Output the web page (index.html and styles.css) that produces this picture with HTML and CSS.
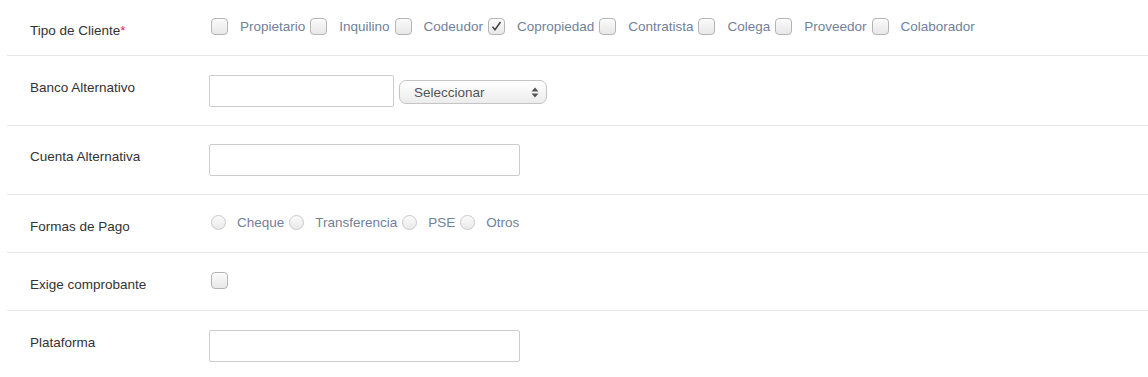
FILE: index.html
```html
<!DOCTYPE html>
<html lang="es">
<head>
    <meta charset="UTF-8">
    <meta name="viewport" content="width=device-width, initial-scale=1.0">
    <title>Cliente</title>
    <link rel="stylesheet" href="styles.css">
</head>
<body>
    <form class="client-form">
        <div class="form-row row-first">
            <label class="row-label label-low">Tipo de Cliente<span class="required">*</span></label>
            <div class="options">
                <label class="opt"><span class="box"></span>Propietario</label>
                <label class="opt"><span class="box"></span>Inquilino</label>
                <label class="opt"><span class="box"></span>Codeudor</label>
                <label class="opt"><span class="box checked"><svg width="15" height="15" viewBox="0 0 15 15"><path d="M3.5 7.8 L6 10.8 L11.5 3" fill="none" stroke="#444" stroke-width="1.5"/></svg></span>Copropiedad</label>
                <label class="opt"><span class="box"></span>Contratista</label>
                <label class="opt"><span class="box"></span>Colega</label>
                <label class="opt"><span class="box"></span>Proveedor</label>
                <label class="opt"><span class="box"></span>Colaborador</label>
            </div>
        </div>

        <div class="form-row row-input row-tall">
            <label class="row-label label-high">Banco Alternativo</label>
            <div class="controls">
                <input type="text" class="text-input short">
                <div class="fake-select">
                    <span>Seleccionar</span>
                    <svg width="8" height="11" viewBox="0 0 8 11"><path d="M4 0.5 L7.5 4.5 L0.5 4.5 Z M4 10.5 L7.5 6.5 L0.5 6.5 Z" fill="#555"/></svg>
                </div>
            </div>
        </div>

        <div class="form-row row-input">
            <label class="row-label label-high">Cuenta Alternativa</label>
            <div class="controls">
                <input type="text" class="text-input">
            </div>
        </div>

        <div class="form-row row-check">
            <label class="row-label label-low">Formas de Pago</label>
            <div class="options">
                <label class="opt radio-opt"><span class="radio"></span>Cheque</label>
                <label class="opt radio-opt"><span class="radio"></span>Transferencia</label>
                <label class="opt radio-opt"><span class="radio"></span>PSE</label>
                <label class="opt radio-opt"><span class="radio"></span>Otros</label>
            </div>
        </div>

        <div class="form-row row-check">
            <label class="row-label label-low">Exige comprobante</label>
            <div class="options">
                <span class="box"></span>
            </div>
        </div>

        <div class="form-row row-input no-border">
            <label class="row-label label-high">Plataforma</label>
            <div class="controls">
                <input type="text" class="text-input">
            </div>
        </div>
    </form>
</body>
</html>
```

FILE: styles.css
```css
body {
    margin: 0;
    font-family: "Liberation Sans", Arial, sans-serif;
    font-size: 13.5px;
    color: #333;
    background-color: #fff;
}
.client-form {
    margin-left: 7px;
}
.form-row {
    display: flex;
    align-items: center;
    border-bottom: 1px solid #e6e6e6;
    box-sizing: border-box;
}
.row-first {
    height: 56px;
}
.row-input {
    height: 69px;
}
.row-tall {
    height: 70px;
}
.row-check {
    height: 58px;
}
.no-border {
    border-bottom: none;
}
.row-label {
    width: 202px;
    flex-shrink: 0;
    box-sizing: border-box;
    padding-left: 23px;
    line-height: 18px;
}
.label-high {
    padding-bottom: 6px;
}
.label-low {
    padding-top: 7px;
}
.required {
    color: #e0245e;
}
.options {
    display: flex;
    align-items: center;
    padding-left: 2px;
    padding-bottom: 2px;
}
.opt {
    display: flex;
    align-items: center;
    color: #71819a;
    line-height: 18px;
    margin-right: 5px;
}
.box {
    width: 17px;
    height: 17px;
    box-sizing: border-box;
    border: 1px solid #b4b4b4;
    border-radius: 4px;
    background: linear-gradient(#fafafa, #e8e8e8);
    box-shadow: inset 0 1px 1px rgba(255, 255, 255, 0.8);
    display: flex;
    align-items: center;
    justify-content: center;
    margin-right: 12px;
    flex-shrink: 0;
}
.radio {
    width: 15px;
    height: 15px;
    box-sizing: border-box;
    border: 1px solid #c9c9c9;
    border-radius: 50%;
    background: linear-gradient(#fbfbfb, #e9e9e9);
    margin-right: 11px;
    flex-shrink: 0;
}
.controls {
    display: flex;
    align-items: center;
}
.text-input {
    width: 311px;
    height: 32px;
    box-sizing: border-box;
    border: 1px solid #ccc;
    border-radius: 2px;
    margin: 0;
    padding: 4px 8px;
    font-family: inherit;
}
.text-input.short {
    width: 185px;
}
.fake-select {
    width: 148px;
    height: 24px;
    box-sizing: border-box;
    margin-left: 5px;
    margin-top: 3px;
    border: 1px solid #c4c4c4;
    border-radius: 7px;
    background: linear-gradient(#ffffff, #ececec);
    display: flex;
    align-items: center;
    justify-content: space-between;
    padding: 0 7px 0 14px;
    color: #555;
    font-size: 13.5px;
}
```
